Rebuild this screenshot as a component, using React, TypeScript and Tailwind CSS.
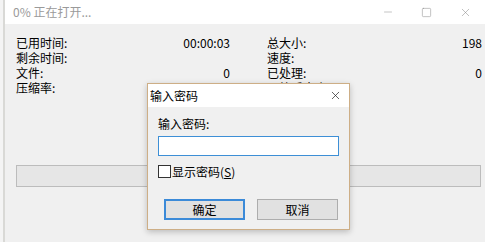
import { X, Minus, Square } from 'lucide-react'

const font = { fontFamily: '"Noto Sans CJK SC", "Microsoft YaHei", sans-serif' }

function Row({ label, value }: { label: string; value?: string }) {
  return (
    <div className="flex h-[15px] items-center justify-between leading-[15px]">
      <span>{label}</span>
      <span>{value}</span>
    </div>
  )
}

function PasswordDialog() {
  return (
    <div className="absolute left-[147px] top-[83px] flex h-[147px] w-[203px] flex-col border border-[#cdae86] bg-[#f0f0f0] shadow-[0_2px_6px_rgba(0,0,0,0.22)]">
      <div className="flex h-[23px] shrink-0 items-center justify-between bg-white pl-[2px] pr-[7px]">
        <span className="text-[12px] text-black">输入密码</span>
        <X size={13} strokeWidth={1.3} className="text-[#222]" />
      </div>
      <div className="flex flex-col px-[10px] pt-[9px]">
        <div className="h-[16px] text-[12px] leading-[16px] text-black">输入密码:</div>
        <div className="mt-[4px] h-[20px] w-[181px] border border-[#3d8fd6] bg-white" />
        <label className="mt-[8px] flex h-[15px] items-center gap-[1px] text-[12px] text-black">
          <span className="h-[13px] w-[13px] border border-[#333] bg-white" />
          <span>
            显示密码(<span className="underline">S</span>)
          </span>
        </label>
        <div className="mt-[20px] flex gap-[12px] pl-[6px]">
          <button className="h-[21px] w-[81px] border-2 border-[#3b8ad8] bg-[#e1e1e1] text-[12px] leading-none text-black">
            确定
          </button>
          <button className="h-[21px] w-[81px] border border-[#adadad] bg-[#e1e1e1] text-[12px] leading-none text-black">
            取消
          </button>
        </div>
      </div>
    </div>
  )
}

export default function App() {
  return (
    <div className="relative h-[242px] w-[485px] overflow-hidden bg-[#f4f4f4]" style={font}>
      <div className="ml-[3px] flex h-full flex-col border-l-2 border-[#d9d9d6]">
        <div className="flex h-[24px] shrink-0 items-center justify-between bg-white pl-[8px]">
          <span className="text-[12px] text-[#9a9a9a]">0% 正在打开...</span>
          <div className="flex items-center text-[#8a8a8a]">
            <span className="flex w-[39px] justify-center">
              <Minus size={12} strokeWidth={1} />
            </span>
            <span className="flex w-[39px] justify-center">
              <Square size={11} strokeWidth={1.1} />
            </span>
            <span className="flex w-[39px] justify-center">
              <X size={13} strokeWidth={1} />
            </span>
          </div>
        </div>
        <div className="flex flex-1 flex-col bg-[#f0f0f0] pl-[11px] pr-[3px] pt-[11px] text-[12px] text-black">
          <div className="grid grid-cols-[214px_215px] gap-x-[37px]">
            <div className="flex flex-col">
              <Row label="已用时间:" value="00:00:03" />
              <Row label="剩余时间:" />
              <Row label="文件:" value="0" />
              <Row label="压缩率:" />
            </div>
            <div className="flex flex-col">
              <Row label="总大小:" value="198" />
              <Row label="速度:" />
              <Row label="已处理:" value="0" />
              <Row label="压缩后大小:" />
            </div>
          </div>
          <div className="mt-[70px] h-[22px] w-[465px] border border-[#bcbcbc] bg-[#e6e6e6]" />
        </div>
      </div>
      <PasswordDialog />
    </div>
  )
}
